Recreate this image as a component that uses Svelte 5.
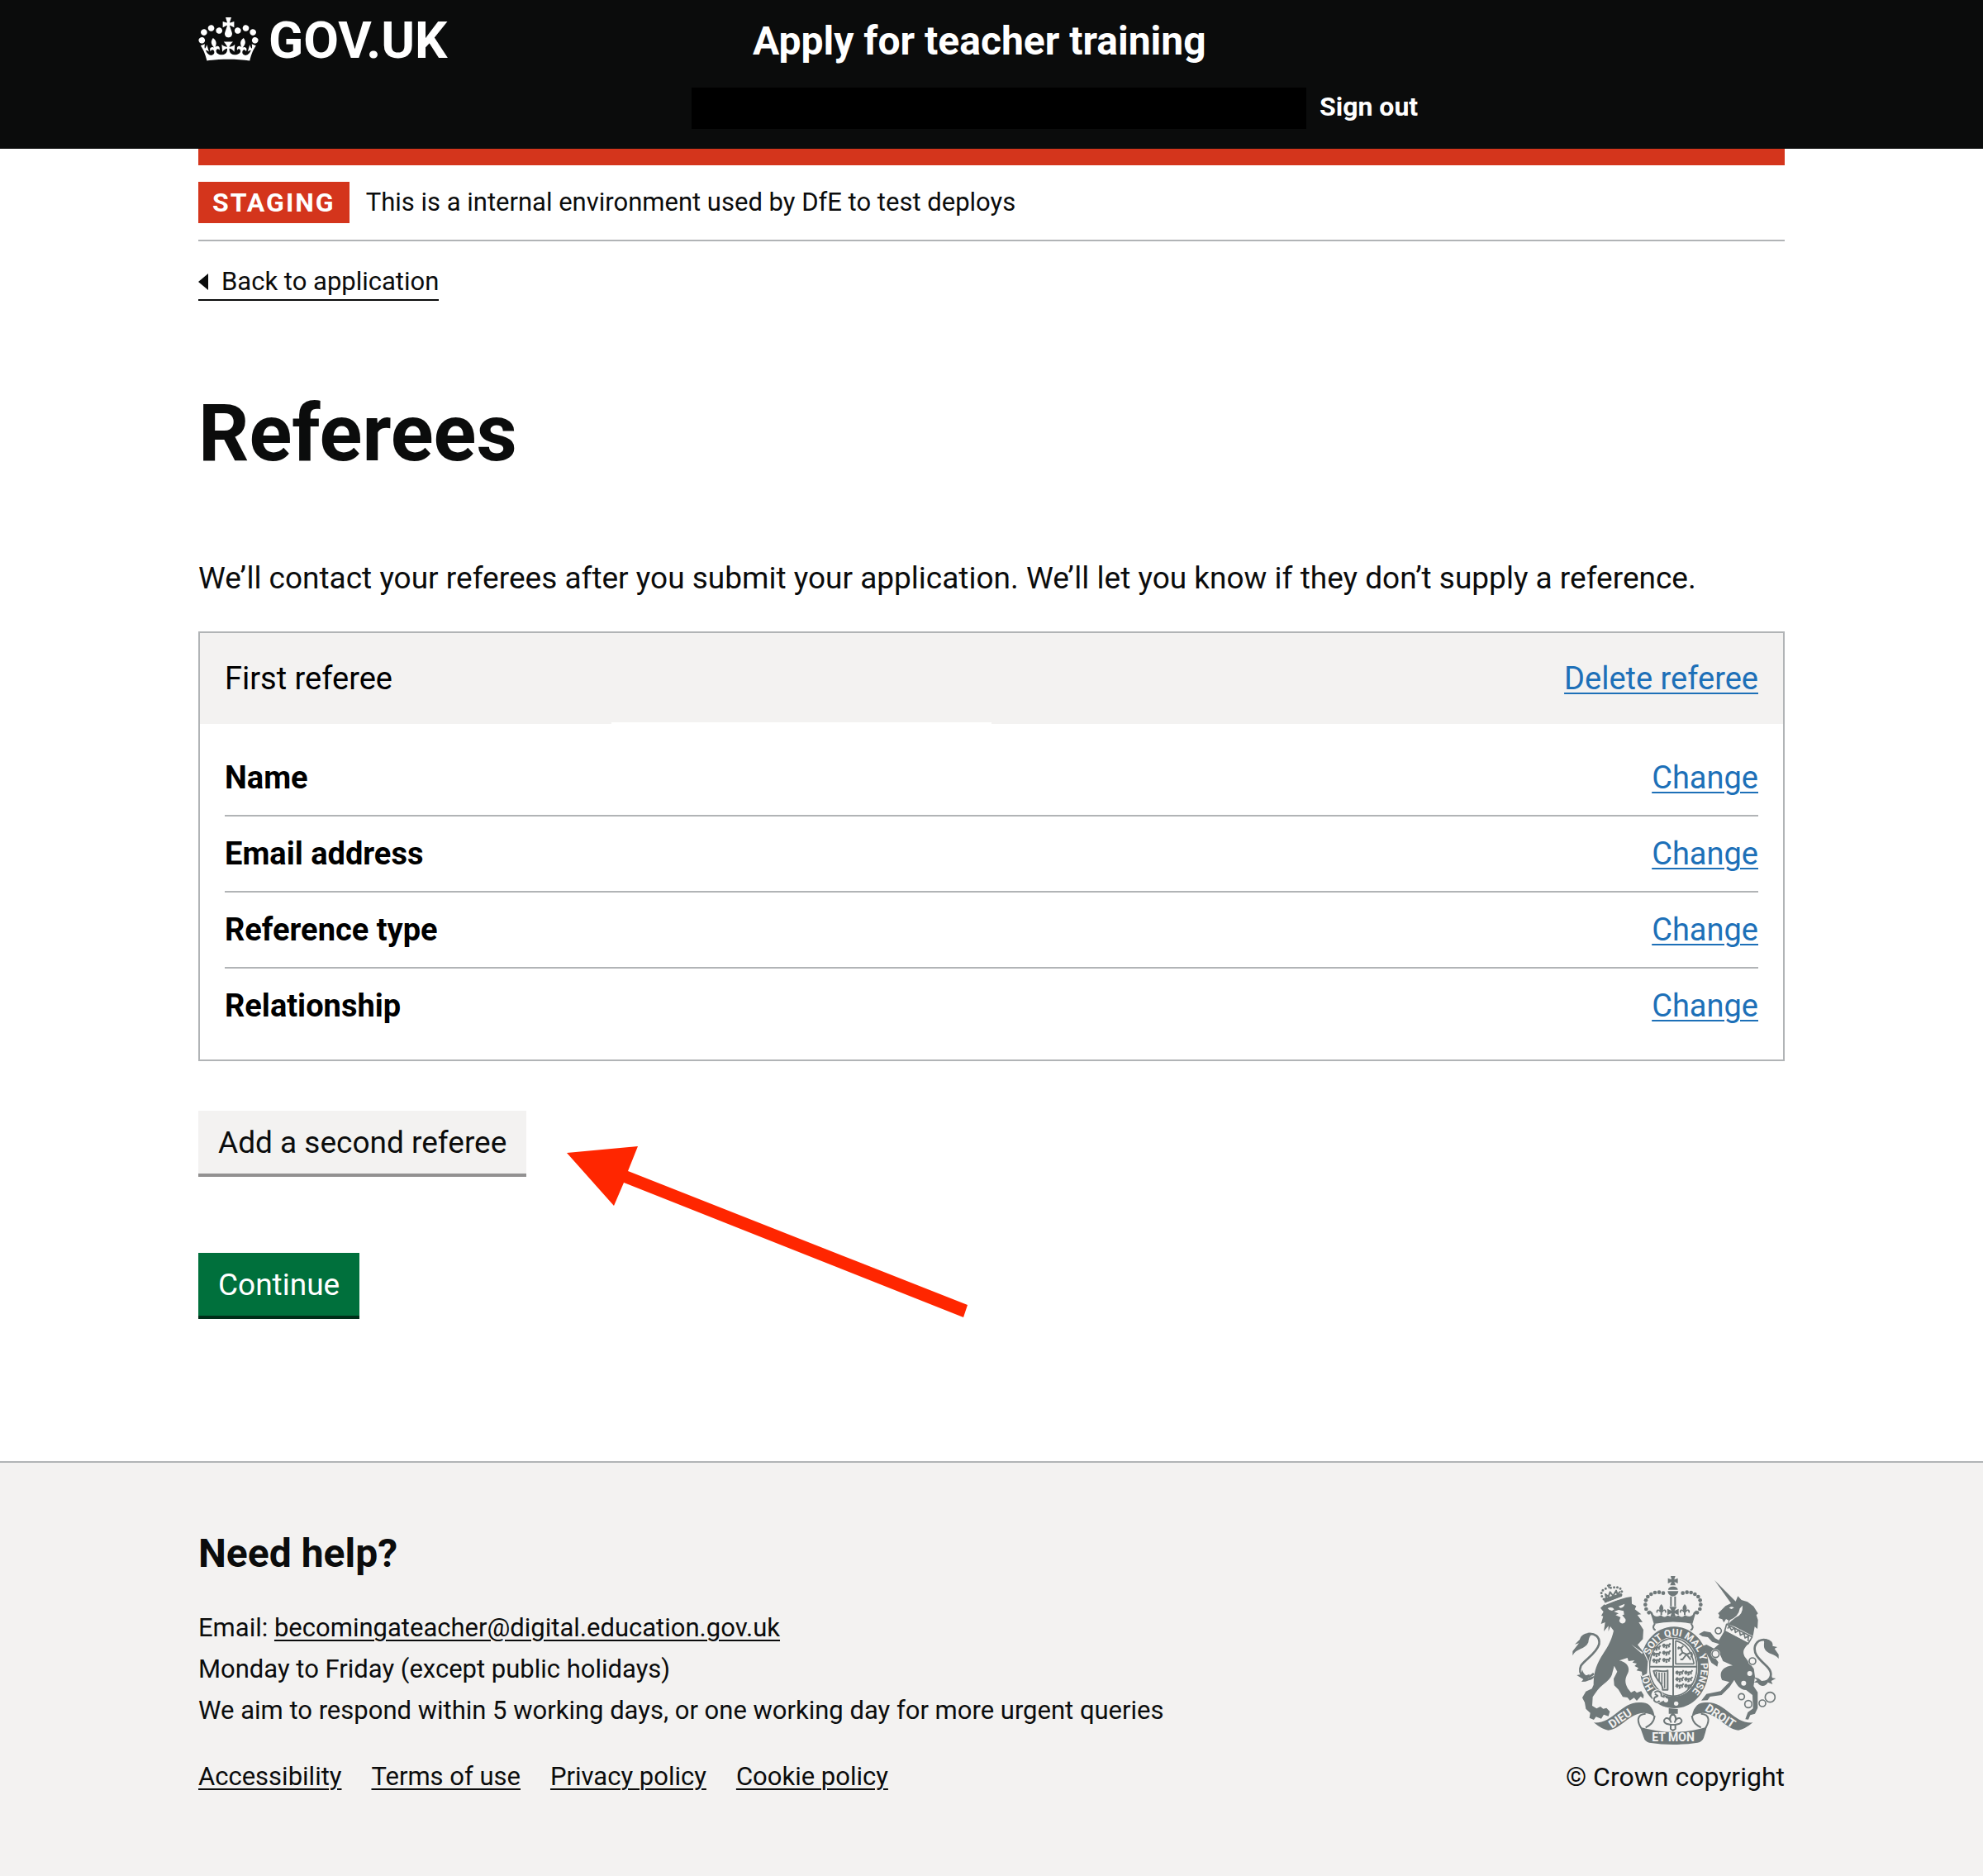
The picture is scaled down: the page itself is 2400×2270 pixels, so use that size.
<script>
  const rows = ['Name', 'Email address', 'Reference type', 'Relationship'];
  const footerLinks = ['Accessibility', 'Terms of use', 'Privacy policy', 'Cookie policy'];
  // Positions of the small walking lions on the shield.
  const passant = [
    [364, 302], [364, 325], [364, 348],
    [400, 294], [400, 320], [400, 346],
    [448, 392], [448, 416], [448, 440],
    [480, 392], [480, 416], [480, 440]
  ];
  const crownBeads = [
    [402, 110], [387, 107], [372, 108], [358, 114], [346, 123],
    [339, 136], [337, 152], [340, 168], [350, 181]
  ];
  const chain = [
    [602, 247, 11], [592, 331, 13], [726, 357, 12], [686, 486, 11],
    [711, 513, 13], [762, 510, 12], [790, 488, 18]
  ];
</script>

<header class="header">
  <div class="container header-grid">
    <a class="logo" href="/">
      <svg class="crown" viewBox="0 0 132 97" aria-hidden="true"><path fill="currentColor" fill-rule="evenodd" d="M25 30.2c3.5 1.5 7.7-.2 9.1-3.7 1.5-3.6-.2-7.8-3.9-9.2-3.6-1.4-7.6.3-9.1 3.9-1.4 3.5.3 7.5 3.9 9zM9 39.5c3.6 1.5 7.8-.2 9.2-3.7 1.5-3.6-.2-7.8-3.9-9.1-3.6-1.5-7.6.2-9.1 3.8-1.4 3.5.3 7.5 3.8 9zM4.4 57.2c3.5 1.5 7.7-.2 9.1-3.8 1.5-3.6-.2-7.7-3.9-9.1-3.5-1.5-7.6.3-9.1 3.8-1.4 3.5.3 7.6 3.9 9.1zm38.3-21.4c3.5 1.5 7.7-.2 9.1-3.8 1.5-3.6-.2-7.7-3.9-9.1-3.6-1.5-7.6.3-9.1 3.8-1.3 3.6.4 7.7 3.9 9.1zm64.4-5.6c-3.6 1.5-7.8-.2-9.1-3.7-1.5-3.6.2-7.8 3.8-9.2 3.6-1.4 7.7.3 9.2 3.9 1.3 3.5-.4 7.5-3.9 9zm15.9 9.3c-3.6 1.5-7.7-.2-9.1-3.7-1.5-3.6.2-7.8 3.7-9.1 3.6-1.5 7.7.2 9.2 3.8 1.5 3.5-.3 7.5-3.8 9zm4.7 17.7c-3.6 1.5-7.8-.2-9.2-3.8-1.5-3.6.2-7.7 3.9-9.1 3.6-1.5 7.7.3 9.2 3.8 1.3 3.5-.4 7.6-3.9 9.1zM89.3 35.8c-3.6 1.5-7.8-.2-9.2-3.8-1.4-3.6.2-7.7 3.9-9.1 3.6-1.5 7.7.3 9.2 3.8 1.4 3.6-.3 7.7-3.9 9.1zM69.7 17.7l8.9 4.7V9.3l-8.9 2.8c-.2-.3-.5-.6-.9-.9L72.4 0H59.6l3.5 11.2c-.3.3-.6.5-.9.9l-8.8-2.8v13.1l8.8-4.7c.3.3.6.7.9.9l-5 15.4v.1c-.2.8-.4 1.6-.4 2.4 0 4.1 3.1 7.5 7 8.1h.2c.3 0 .7.1 1 .1.4 0 .7 0 1-.1h.2c4-.6 7.1-4.1 7.1-8.1 0-.8-.1-1.7-.4-2.4V34l-5.1-15.4c.4-.2.7-.6 1-.9zM66 92.8c16.9 0 32.8 1.1 47.1 3.2 4-16.9 8.9-26.7 14-33.5l-9.6-3.4c1 4.9 1.1 7.2 0 10.2-1.5-1.4-3-4.3-4.2-8.7L108.6 76c2.8-2 5-3.2 7.5-3.3-4.4 9.4-10 11.9-13.6 11.2-4.3-.8-6.3-4.6-5.6-7.9 1-4.7 5.7-5.9 8-.5 4.3-8.7-3-11.4-7.6-8.8 7.1-7.2 7.9-13.5 2.1-21.1-8 6.1-8.1 12.3-4.5 20.8-4.7-5.4-12.1-2.5-9.5 6.2 3.4-5.2 7.9-2 7.2 3.1-.6 4.3-6.4 7.8-13.5 7.2-10.3-.9-10.9-8-11.2-13.8 2.5-.5 7.1 1.8 11 7.3L80.2 60c-4.1 4.4-8 5.3-12.3 5.4 1.4-4.4 8-11.6 8-11.6H55.5s6.4 7.2 7.9 11.6c-4.2-.1-8-1-12.3-5.4l1.4 16.4c3.9-5.5 8.5-7.7 10.9-7.3-.3 5.8-.9 12.8-11.1 13.8-7.2.6-12.9-2.9-13.5-7.2-.7-5 3.8-8.3 7.1-3.1 2.7-8.7-4.6-11.6-9.4-6.2 3.7-8.5 3.6-14.7-4.6-20.8-5.8 7.6-5 13.9 2.2 21.1-4.7-2.6-11.9.1-7.7 8.8 2.3-5.5 7.1-4.2 8.1.5.7 3.3-1.3 7.1-5.7 7.9-3.5.7-9-1.8-13.5-11.2 2.5.1 4.7 1.3 7.5 3.3l-4.7-15.4c-1.2 4.4-2.7 7.2-4.3 8.7-1.1-3-.9-5.3 0-10.2l-9.5 3.4c5 6.9 9.9 16.7 14 33.5 14.8-2.1 30.8-3.2 47.7-3.2z"/></svg>
      <span>GOV.UK</span>
    </a>
    <div class="header-content">
      <a class="service" href="/apply">Apply for teacher training</a>
      <nav class="account" aria-label="Account">
        <span class="account-email"></span>
        <a href="/sign-out">Sign out</a>
      </nav>
    </div>
  </div>
</header>

<div class="container">
  <div class="phase">
    <strong class="tag">STAGING</strong>
    <span>This is a internal environment used by DfE to test deploys</span>
  </div>
  <a class="back" href="/application">
    <svg viewBox="0 0 12 20" aria-hidden="true"><path d="M0 10L12 0V20Z" fill="currentColor" /></svg>
    <span>Back to application</span>
  </a>

  <main>
    <h1>Referees</h1>
    <p class="intro">We’ll contact your referees after you submit your application. We’ll let you know if they don’t supply a reference.</p>

    <section class="card">
      <div class="card-header">
        <h2>First referee</h2>
        <a href="/delete">Delete referee</a>
      </div>
      <dl>
        {#each rows as row}
          <div class="row">
            <dt>{row}</dt>
            <dd><a href="/change">Change</a></dd>
          </div>
        {/each}
      </dl>
    </section>

    <div class="actions">
      <button class="button secondary" type="button">Add a second referee</button>
      <button class="button" type="button">Continue</button>
      <svg class="pointer" viewBox="0 0 486 208" aria-hidden="true">
        <path fill="#ff2600" d="M0 9L86 1L74 31L485 193L480 208L69 45L57 73Z" />
      </svg>
    </div>
  </main>
</div>

<footer class="footer">
  <div class="container footer-grid">
    <div>
      <h2>Need help?</h2>
      <p>Email: <a href="mailto:becomingateacher@digital.education.gov.uk">becomingateacher@digital.education.gov.uk</a></p>
      <p>Monday to Friday (except public holidays)</p>
      <p>We aim to respond within 5 working days, or one working day for more urgent queries</p>
      <ul>
        {#each footerLinks as link}
          <li><a href="/help">{link}</a></li>
        {/each}
      </ul>
    </div>
    <a class="copyright" href="/copyright">
      <svg class="crest" viewBox="66 45 762 615" aria-hidden="true">
        <defs>
          <path id="motto" d="M369 456A97 115 0 1 1 504 469" />
          <path id="walking" d="M0 5L5 2L8 6L24 4L28 -2M7 7L3 14M13 7L15 14L10 15M21 6L24 13M2 5L0 10" />
          <g id="fleur">
            <path d="M0 -17C10 -6 9 2 3 10L3 22H-3V10C-9 2 -10 -6 0 -17Z" />
            <path d="M-3 12C-8 0 -19 5 -15 14M3 12C8 0 19 5 15 14" fill="none" stroke="currentColor" stroke-width="5" />
          </g>
        </defs>

        <g class="ink">
          <!-- Royal crown -->
          <path d="M429 48H446L442 61L455 56V75L442 69L447 82H427L432 69L419 75V56L432 61Z" />
          <path d="M420 98C420 82 455 82 455 98ZM418 103H457C456 112 450 120 437 122C424 120 419 112 418 103Z" />
          <path class="line" d="M430 122V158M445 122V158" />
          {#each crownBeads as [x, y]}
            <circle cx={x} cy={y} r="7" />
            <circle cx={875 - x} cy={y} r="7" />
          {/each}
          <use href="#fleur" x="395" y="167" />
          <use href="#fleur" x="480" y="167" />
          <path d="M424 160H451L443 174L458 167V190L443 183L448 197H427L432 183L417 190V167L432 174Z" />
          <path d="M352 172Q363 178 366 189Q376 200 395 190Q404 203 417 191L437 197L458 191Q471 203 480 190Q499 200 509 189Q512 178 523 172Q514 200 508 222Q437 207 368 222Q362 200 352 172Z" />
          <path class="line" d="M372 221Q359 237 374 245M503 221Q516 237 501 245" />

          <!-- Garter and shield -->
          <path fill-rule="evenodd" d="M442 232C512 232 567 297 567 380C567 463 514 528 442 528C370 528 318 463 318 380C318 297 370 232 442 232ZM438 270C387 270 348 317 348 380C348 443 387 486 438 486C489 486 528 443 528 380C528 317 489 270 438 270Z" />
          <ellipse cx="438" cy="379" rx="86" ry="105" class="line thin" />
          <path class="line" d="M438 276V484M352 377H524" />
          {#each passant as [x, y]}
            <use href="#walking" {x} {y} class="line" />
          {/each}
          <path class="line thin" d="M447 283V367H514M447 283Q500 295 514 367" />
          <path class="line" d="M456 306L466 311L472 326L488 333L503 325M472 326L460 337M486 333L472 351L464 350M488 334L502 352M466 311L475 301M456 306L458 314M503 325Q511 335 502 343" />
          <path class="line" d="M367 393C385 387 402 400 418 391V461H400C401 430 375 434 367 393Z" />
          <path class="line thin" d="M377 396V417M387 398V429M397 399V442M407 398V455" />
        </g>

        <g class="paper">
          <text class="motto"><textPath href="#motto">HONI</textPath></text>
          <text class="motto"><textPath href="#motto" startOffset="126">SOIT QUI MAL Y PENSE</textPath></text>
          <circle cx="412" cy="499" r="8" />
          <circle cx="449" cy="511" r="8" />
        </g>
        <path class="halo" d="M366 470C385 455 399 471 398 485C418 491 400 498 389 503C376 513 360 500 370 489C360 485 362 477 366 470Z" />
        <path class="line" d="M370 471C386 459 398 472 395 483L407 488M372 476L382 483L371 489C362 502 379 512 389 501" />

        <!-- Lion -->
        <g class="ink">
          <path class="halo" d="M286 297L312 310L330 325L346 360L348 405L328 411L290 375Z" />
          <path d="M174 164L193 146L215 142L268 126L287 123L288 149L304 157L299 169L322 187L308 189L327 215L313 216L330 243L328 277L309 298L328 321L346 358L343 402L326 411L324 395L305 391L312 382L298 375L306 366L290 362L298 354L276 357L272 345L242 355C266 360 283 376 274 400C260 426 264 438 273 456L285 471L298 464L306 472L322 466L331 480L330 493L320 485L306 501L296 490L281 500L272 489L255 487L239 460L224 445L222 421L235 395L224 374L218 397C214 427 182 438 163 463L146 487L144 519L160 529L174 522L184 530L196 527L208 540L203 557L186 551L177 566L158 559L150 570L134 563L137 545L121 530L117 507L108 490L121 467L143 457L149 443C149 400 158 370 184 330C203 303 215 278 222 247L210 231L203 249L203 229L186 249L191 216L176 222L184 194L177 192L185 178Z" />
          <path d="M190 146L184 130L250 110L252 124Z" />
          <path class="line beads" d="M186 132C170 112 176 94 205 92M249 116C258 96 244 83 207 92" />
          <path class="line" d="M205 77V92M198 83L212 81M196 130L192 114L203 123L209 106L220 120L231 101L236 115L246 104" />
          <path class="line tail" d="M150 402C119 430 90 406 103 374C118 350 158 332 169 296C174 267 152 255 128 258" />
          <path d="M145 257C119 250 103 264 99 278L81 296L96 292L73 321V337C84 311 119 316 130 289C132 273 135 264 145 257ZM108 388C111 398 113 402 122 409L135 404L128 419L153 410C147 427 133 425 120 431L105 432L112 423L88 408L103 405Z" />
        </g>
        <g class="paper">
          <path d="M188 147L252 122L252 128L190 154ZM200 165Q216 157 224 169L216 174Q206 174 200 165ZM240 158L262 149Q260 163 246 164ZM223 177L240 171L258 175L260 188L253 190L265 205C269 220 249 228 242 211L247 198L229 190L240 184Z" />
          <path d="M286 296L328 326L325 331Z" />
        </g>

        <!-- Unicorn -->
        <g class="ink">
          <path d="M588 63L665 140L673 121L686 135L708 142L730 158L746 184L740 190L746 208L744 240L734 232L728 266L662 232L634 222L640 210L630 204L622 217L616 205L603 201L606 190L601 184L628 157L648 147Z" />
          <path d="M625 246L713 292C699 308 687 318 697 340L731 385L735 414L730 448L745 470V527L735 548L718 553L711 569L700 568L709 543L728 529L726 480L703 462C679 461 667 440 660 425L643 451L614 480L572 486L563 499L540 500L559 476L610 466L642 433L616 426C602 399 617 377 654 373L619 357L604 323L579 331L602 361L598 377L577 363L557 325L545 302L559 297L586 311L605 295L580 287L564 270L544 267L531 259L550 248L574 253L590 274L604 281Z" />
          <path class="line thin" d="M632 223L725 269L710 294L625 248ZM636 239L641 230L650 245L661 236L664 253L678 244L682 263L695 256L699 273L711 266L710 285" />
          <path class="line tail" d="M756 433C787 435 807 407 780 378C754 351 728 334 735 303C744 275 771 277 786 284" />
          <path d="M765 278C783 276 803 284 799 302L816 306L806 312L821 333V348C808 329 779 335 769 310C765 296 772 288 765 278ZM790 396L798 418L811 420L794 429L799 441L782 434C771 453 754 449 744 435L731 434L743 426L728 414L748 420L766 434C784 429 793 414 790 396Z" />
          {#each chain as [cx, cy, r]}
            <circle {cx} {cy} {r} class="halo" />
            <circle {cx} {cy} {r} class="line thin" />
          {/each}
        </g>
        <g class="paper">
          <circle cx="716" cy="402" r="9" />
          <circle cx="694" cy="437" r="9" />
          <path d="M641 164Q650 156 659 163L650 168ZM690 155Q692 188 666 198Q649 210 638 222L644 208Q676 195 680 166Z" />
        </g>

        <!-- Scroll -->
        <g class="ink">
          <path d="M150 580C226 584 250 495 330 508C352 508 370 535 371 562C360 548 351 549 337 546C283 540 247 607 202 608Q178 604 150 580Z" />
          <path d="M727 580C651 584 627 495 547 508C525 508 507 535 506 562C517 548 526 549 540 546C594 540 630 607 675 608Q699 604 727 580Z" />
          <path class="line" d="M338 548C303 550 308 578 322 600M371 555C368 582 353 590 338 598M539 548C574 550 569 578 555 600M506 555C509 582 524 590 539 598" />
          <path d="M318 596Q438 632 560 596Q555 617 549 635Q544 649 527 653Q438 667 351 653Q335 649 331 634Z" />
          <path d="M422 528L455 531V548H422Z" />
          <path class="line" d="M437 548Q454 561 444 578Q450 562 462 564Q477 574 461 584L446 588V603L437 609L429 603V588L413 584Q397 574 412 564Q424 562 430 578Q420 561 437 548ZM420 588H455" />
        </g>
        <g class="paper scroll">
          <text x="0" y="0" transform="translate(216 602) rotate(-34)">DIEU</text>
          <text x="0" y="0" transform="translate(551 535) rotate(33)">DROIT</text>
          <text x="438" y="649" text-anchor="middle">ET MON</text>
        </g>
      </svg>
      <span>© Crown copyright</span>
    </a>
  </div>
</footer>

<style>
  :global(body) {
    margin: 0;
    background: #ffffff;
    color: #0b0c0c;
    font-family: Roboto, "Liberation Sans", sans-serif;
    font-size: 38px;
    line-height: 50px;
  }
  a { color: inherit; text-underline-offset: 4px; text-decoration-thickness: 2px; }
  h1, h2, p, dl, dd, ul { margin: 0; padding: 0; }
  .container { max-width: 1920px; margin: 0 auto; }
  .header { background: #0b0c0c; color: #ffffff; }
  .header a { text-decoration: none; }
  .header-grid { display: flex; padding-bottom: 24px; }
  .logo { display: flex; flex: 0 0 597px; gap: 12px; padding-top: 21px; font-size: 62px; line-height: 56px; font-weight: 700; }
  .crown { width: 73px; height: 53px; }
  .header-content { flex: 1; }
  .service { display: block; margin: 20px 0 0 74px; font-size: 48px; line-height: 60px; font-weight: 700; }
  .account { display: flex; gap: 16px; margin-top: 26px; font-size: 32px; line-height: 46px; font-weight: 700; }
  .account-email { width: 744px; height: 50px; background: #000000; }
  .phase { display: flex; gap: 20px; padding: 20px 0; border-top: 20px solid #d4351c; border-bottom: 2px solid #b1b4b6; font-size: 31px; }
  .tag { padding: 0 17px; background: #d4351c; color: #ffffff; font-size: 32px; letter-spacing: 2px; }
  .back { display: inline-flex; align-items: center; gap: 16px; margin-top: 28px; border-bottom: 2px solid #0b0c0c; font-size: 31px; line-height: 42px; text-decoration: none; }
  .back svg { width: 12px; height: 20px; }
  h1 { margin-top: 110px; font-size: 96px; line-height: 100px; font-weight: 700; }
  .intro { margin: 101px 0 39px; font-size: 37px; }
  .card { border: 2px solid #b1b4b6; color: #000000; }
  .card a { color: #1d70b8; }
  .card-header { position: relative; display: flex; justify-content: space-between; padding: 30px; background: #f3f2f1; }
  .card-header::after { content: ""; position: absolute; left: 26%; bottom: 0; width: 24%; height: 2px; background: #ffffff; }
  .card-header h2 { font-size: 38px; font-weight: 400; }
  dl { padding: 20px 30px; }
  .row { display: flex; justify-content: space-between; padding: 20px 0; border-bottom: 2px solid #b1b4b6; }
  .row:last-child { border-bottom: 0; }
  dt { font-weight: 700; }
  .actions { position: relative; display: flex; flex-direction: column; align-items: flex-start; gap: 96px; margin: 60px 0 176px; }
  .button { padding: 14px 24px 12px; border: 0; background: #00703c; box-shadow: 0 4px 0 #002d18; color: #ffffff; font: inherit; font-size: 37px; }
  .secondary { background: #f3f2f1; box-shadow: 0 4px 0 #929191; color: #0b0c0c; }
  .pointer { position: absolute; left: 446px; top: 42px; width: 486px; height: 208px; }
  .footer { min-height: 420px; padding: 80px 0 0; border-top: 2px solid #b1b4b6; background: #f3f2f1; font-size: 31px; }
  .footer-grid { display: flex; justify-content: space-between; align-items: flex-end; }
  .footer h2 { margin-bottom: 35px; font-size: 48px; line-height: 60px; }
  ul { display: flex; gap: 36px; margin-top: 30px; list-style: none; }
  .copyright { display: flex; flex-direction: column; align-items: center; font-size: 32px; text-decoration: none; }
  .crest { width: 254px; height: 205px; margin-bottom: 14px; color: #6f7879; }
  .ink { fill: #6f7879; }
  .paper { fill: #f3f2f1; font-weight: 700; }
  .line { fill: none; stroke: #6f7879; stroke-width: 6; stroke-linejoin: round; }
  .thin { stroke-width: 5; }
  .tail { stroke-width: 8; }
  .beads { stroke-width: 9; stroke-linecap: round; stroke-dasharray: 0 12; }
  .halo { fill: #f3f2f1; stroke: #f3f2f1; stroke-width: 8; }
  .motto { font-size: 36px; }
  .scroll { font-size: 42px; }
</style>
